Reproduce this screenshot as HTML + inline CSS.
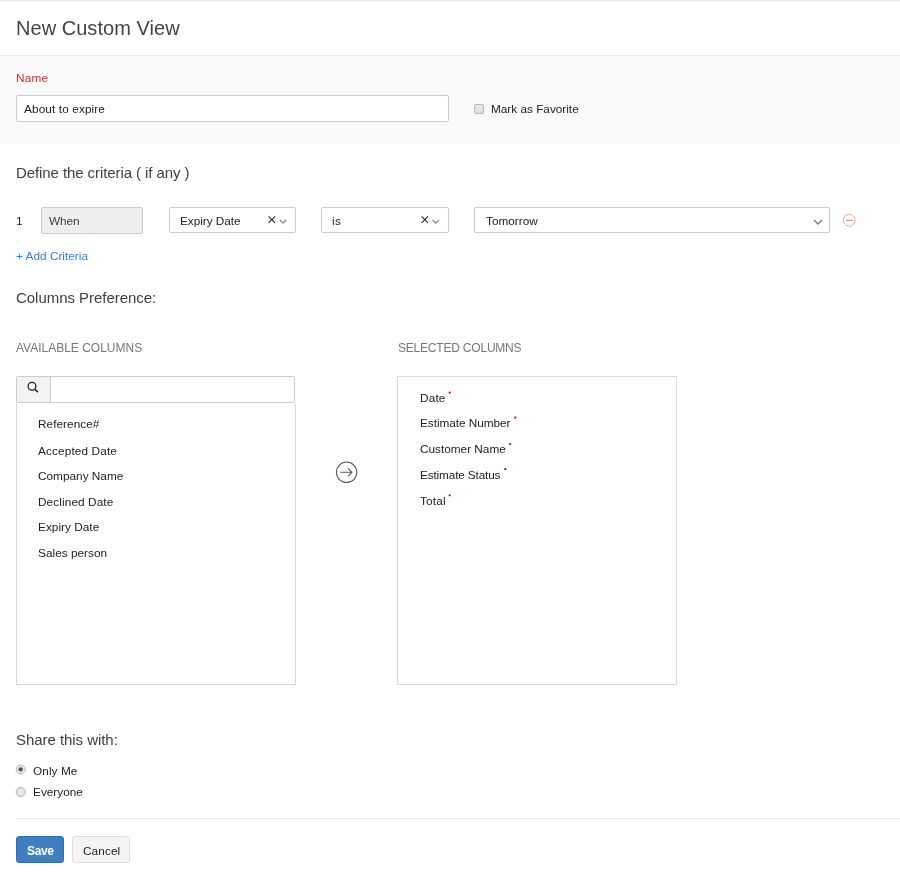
<!DOCTYPE html>
<html>
<head>
<meta charset="utf-8">
<style>
html,body{margin:0;padding:0;}
body{width:900px;height:874px;position:relative;overflow:hidden;background:#fff;font-family:"Liberation Sans",sans-serif;color:#333;}
.a{position:absolute;white-space:nowrap;line-height:1;will-change:transform;}
.box{position:absolute;box-sizing:border-box;}
</style>
</head>
<body>
<!-- top line -->
<div class="box" style="left:0;top:0;width:900px;height:1px;background:#eaeaea"></div>
<div class="box" style="left:0;top:1px;width:900px;height:1px;background:#fafafa"></div>
<!-- header -->
<div class="box" style="left:0;top:55px;width:900px;height:1px;background:#e8e8e8"></div>
<!-- gray name section -->
<div class="box" style="left:0;top:56px;width:900px;height:88px;background:#fafafa"></div>
<div class="box" style="left:16px;top:95px;width:433px;height:27px;background:#fff;border:1px solid #ccc;border-radius:2px"></div>
<div class="box" style="left:474px;top:104px;width:10px;height:10px;background:linear-gradient(#ececec,#dedede);border:1px solid #b5b5b5;border-radius:2px"></div>

<!-- criteria -->
<div class="box" style="left:41px;top:207px;width:102px;height:27px;background:#eee;border:1px solid #ccc;border-radius:2px"></div>
<div class="box" style="left:169px;top:207px;width:127px;height:26px;background:#fff;border:1px solid #ccc;border-radius:2px"></div>
<div class="box" style="left:321px;top:207px;width:128px;height:26px;background:#fff;border:1px solid #ccc;border-radius:2px"></div>
<div class="box" style="left:474px;top:207px;width:356px;height:26px;background:#fff;border:1px solid #ccc;border-radius:1px"></div>

<!-- columns -->

<div class="box" style="left:16px;top:376px;width:279px;height:27px;background:#fff;border:1px solid #ccc;border-radius:2px"></div>
<div class="box" style="left:17px;top:377px;width:34px;height:25px;background:#f3f3f3;border-right:1px solid #ccc;border-radius:2px 0 0 2px"></div>
<div class="box" style="left:16px;top:403px;width:280px;height:282px;background:#fff;border:1px solid #d8d8d8;border-top:none"></div>


<div class="box" style="left:397px;top:376px;width:280px;height:309px;background:#fff;border:1px solid #d8d8d8"></div>

<!-- share -->

<div class="box" style="left:16px;top:818px;width:884px;height:1px;background:#e8e8e8"></div>
<div class="box" style="left:16px;top:836px;width:48px;height:27px;background:#3f7fbf;border:1px solid #2f70b3;border-radius:3px"></div>
<div class="box" style="left:72px;top:836px;width:58px;height:27px;background:#f4f4f4;border:1px solid #dcdcdc;border-radius:3px"></div>
<div id="t_title" class="a" style="left:16.00px;top:18.00px;font-size:20px;letter-spacing:0.040px;color:#444;font-weight:400">New Custom View</div>
<div id="t_name" class="a" style="left:16.00px;top:72.68px;font-size:11.8px;letter-spacing:0.194px;color:#c62d2d;font-weight:400">Name</div>
<div id="t_about" class="a" style="left:23.98px;top:104.08px;font-size:11.8px;letter-spacing:0.113px;color:#222;font-weight:400">About to expire</div>
<div id="t_fav" class="a" style="left:490.63px;top:104.38px;font-size:11.8px;letter-spacing:-0.010px;color:#222;font-weight:400">Mark as Favorite</div>
<div id="t_define" class="a" style="left:16.00px;top:164.70px;font-size:15px;letter-spacing:-0.084px;color:#404040;font-weight:400">Define the criteria ( if any )</div>
<div id="t_1" class="a" style="left:16.00px;top:215.58px;font-size:11.8px;letter-spacing:0.000px;color:#222;font-weight:400">1</div>
<div id="t_when" class="a" style="left:49.35px;top:215.58px;font-size:11.8px;letter-spacing:-0.103px;color:#3a3a3a;font-weight:400">When</div>
<div id="t_exp" class="a" style="left:180.00px;top:215.58px;font-size:11.8px;letter-spacing:-0.039px;color:#222;font-weight:400">Expiry Date</div>
<div id="t_is" class="a" style="left:332.01px;top:215.58px;font-size:11.8px;letter-spacing:0.484px;color:#222;font-weight:400">is</div>
<div id="t_tom" class="a" style="left:485.73px;top:215.58px;font-size:11.8px;letter-spacing:-0.009px;color:#222;font-weight:400">Tomorrow</div>
<div id="t_add" class="a" style="left:16.00px;top:250.78px;font-size:11.8px;letter-spacing:0.016px;color:#2f7fcb;font-weight:400">+ Add Criteria</div>
<div id="t_colpref" class="a" style="left:16.00px;top:290.40px;font-size:15px;letter-spacing:-0.034px;color:#404040;font-weight:400">Columns Preference:</div>
<div id="t_avail" class="a" style="left:16.00px;top:342.40px;font-size:12px;letter-spacing:-0.006px;color:#777;font-weight:400">AVAILABLE COLUMNS</div>
<div id="t_sel" class="a" style="left:397.76px;top:342.40px;font-size:12px;letter-spacing:-0.207px;color:#777;font-weight:400">SELECTED COLUMNS</div>
<div id="t_ref" class="a" style="left:37.62px;top:419.18px;font-size:11.8px;letter-spacing:0.049px;color:#222;font-weight:400">Reference#</div>
<div id="t_acc" class="a" style="left:37.62px;top:446.18px;font-size:11.8px;letter-spacing:0.125px;color:#222;font-weight:400">Accepted Date</div>
<div id="t_comp" class="a" style="left:37.62px;top:470.78px;font-size:11.8px;letter-spacing:0.006px;color:#222;font-weight:400">Company Name</div>
<div id="t_dec" class="a" style="left:37.62px;top:496.78px;font-size:11.8px;letter-spacing:0.100px;color:#222;font-weight:400">Declined Date</div>
<div id="t_exp2" class="a" style="left:37.62px;top:521.98px;font-size:11.8px;letter-spacing:0.022px;color:#222;font-weight:400">Expiry Date</div>
<div id="t_sales" class="a" style="left:37.62px;top:547.58px;font-size:11.8px;letter-spacing:0.026px;color:#222;font-weight:400">Sales person</div>
<div id="t_date" class="a" style="left:419.75px;top:393.48px;font-size:11.8px;letter-spacing:0.152px;color:#222;font-weight:400">Date</div>
<div id="t_estn" class="a" style="left:419.75px;top:418.48px;font-size:11.8px;letter-spacing:-0.042px;color:#222;font-weight:400">Estimate Number</div>
<div id="t_cust" class="a" style="left:419.75px;top:443.98px;font-size:11.8px;letter-spacing:-0.009px;color:#222;font-weight:400">Customer Name</div>
<div id="t_ests" class="a" style="left:419.75px;top:469.98px;font-size:11.8px;letter-spacing:-0.153px;color:#222;font-weight:400">Estimate Status</div>
<div id="t_total" class="a" style="left:419.75px;top:496.08px;font-size:11.8px;letter-spacing:0.180px;color:#222;font-weight:400">Total</div>
<div id="t_share" class="a" style="left:16.00px;top:732.40px;font-size:15px;letter-spacing:-0.050px;color:#404040;font-weight:400">Share this with:</div>
<div id="t_only" class="a" style="left:32.64px;top:766.08px;font-size:11.8px;letter-spacing:0.078px;color:#222;font-weight:400">Only Me</div>
<div id="t_every" class="a" style="left:32.64px;top:786.58px;font-size:11.8px;letter-spacing:0.007px;color:#222;font-weight:400">Everyone</div>
<div id="t_save" class="a" style="left:27.00px;top:845.00px;font-size:12px;letter-spacing:-0.358px;color:#fff;font-weight:700">Save</div>
<div id="t_cancel" class="a" style="left:82.60px;top:846.18px;font-size:11.8px;letter-spacing:0.091px;color:#222;font-weight:400">Cancel</div>
<svg class="box" style="left:0;top:0" width="900" height="874">
  <!-- x icons -->
  <path d="M268.6 216.4 L275 222.8 M275 216.4 L268.6 222.8" stroke="#222" stroke-width="1.05" fill="none"/>
  <path d="M279.8 220 L283 223.2 L286.2 220" stroke="#888" stroke-width="1.2" fill="none"/>
  <path d="M421.6 216.4 L428 222.8 M428 216.4 L421.6 222.8" stroke="#222" stroke-width="1.05" fill="none"/>
  <path d="M432.5 220 L435.7 223.2 L438.9 220" stroke="#888" stroke-width="1.2" fill="none"/>
  <path d="M814 220 L818 224 L822 220" stroke="#7a7a7a" stroke-width="1.25" fill="none"/>
  <circle cx="849.2" cy="220.3" r="5.9" stroke="#ee9a8e" stroke-width="0.9" fill="none"/>
  <path d="M845.6 220.3 H852.8" stroke="#e58073" stroke-width="1.05"/>
  <!-- arrow circle -->
  <circle cx="346.6" cy="472.3" r="10.2" stroke="#555" stroke-width="1.05" fill="none"/>
  <path d="M340.3 472.3 H352 M348 468.3 L352 472.3 L348 476.3" stroke="#555" stroke-width="1.05" fill="none"/>
  <!-- search icon -->
  <circle cx="32" cy="386.3" r="3.9" stroke="#222" stroke-width="1.3" fill="none"/>
  <path d="M34.8 389.1 L38 392.3" stroke="#222" stroke-width="1.5"/>
  <!-- radios -->
  <circle cx="20.7" cy="769.4" r="4.5" fill="#e8e8e8" stroke="#b8b8b8" stroke-width="1"/>
  <circle cx="20.7" cy="769.4" r="2.1" fill="#505050"/>
  <circle cx="20.7" cy="792" r="4.5" fill="#e6e6e6" stroke="#b0b0b0" stroke-width="1"/>
  <!-- red dots -->
  <circle cx="449.7" cy="392.7" r="1.1" fill="#d0021b"/>
  <circle cx="515.3" cy="417.7" r="1.1" fill="#d0021b"/>
  <circle cx="510.1" cy="444.1" r="1.1" fill="#d0021b"/>
  <circle cx="505.3" cy="469.2" r="1.1" fill="#d0021b"/>
  <circle cx="449.7" cy="495.3" r="1.1" fill="#d0021b"/>
</svg>
</body>
</html>
